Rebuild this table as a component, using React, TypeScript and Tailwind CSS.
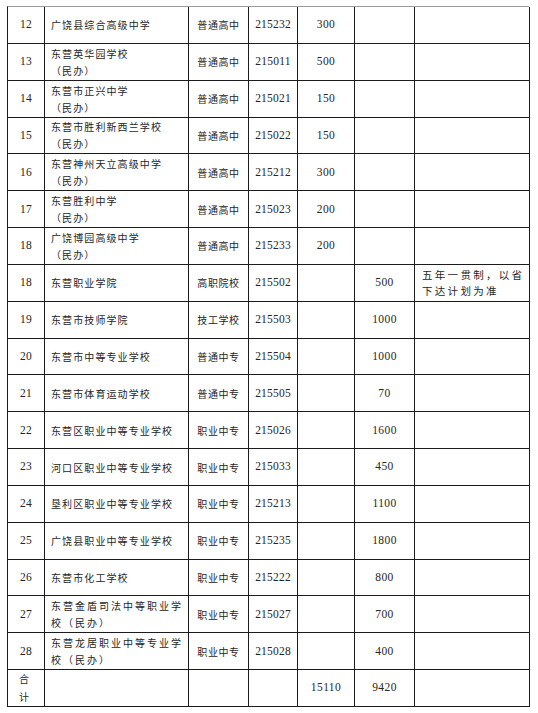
const cjk = "font-['Noto_Sans_CJK_SC',sans-serif]";
const num = "font-['Liberation_Serif','Noto_Sans_CJK_SC',serif]";

type Row = {
  no: string;
  name: string[];
  wide?: boolean;
  type: string;
  code: string;
  a: string;
  b: string;
  note?: string[];
};

const rows: Row[] = [
  { no: '12', name: ['广饶县综合高级中学'], type: '普通高中', code: '215232', a: '300', b: '' },
  { no: '13', name: ['东营英华园学校', '（民办）'], type: '普通高中', code: '215011', a: '500', b: '' },
  { no: '14', name: ['东营市正兴中学', '（民办）'], type: '普通高中', code: '215021', a: '150', b: '' },
  { no: '15', name: ['东营市胜利新西兰学校', '（民办）'], type: '普通高中', code: '215022', a: '150', b: '' },
  { no: '16', name: ['东营神州天立高级中学', '（民办）'], type: '普通高中', code: '215212', a: '300', b: '' },
  { no: '17', name: ['东营胜利中学', '（民办）'], type: '普通高中', code: '215023', a: '200', b: '' },
  { no: '18', name: ['广饶博园高级中学', '（民办）'], type: '普通高中', code: '215233', a: '200', b: '' },
  { no: '18', name: ['东营职业学院'], type: '高职院校', code: '215502', a: '', b: '500', note: ['五年一贯制，以省', '下达计划为准'] },
  { no: '19', name: ['东营市技师学院'], type: '技工学校', code: '215503', a: '', b: '1000' },
  { no: '20', name: ['东营市中等专业学校'], type: '普通中专', code: '215504', a: '', b: '1000' },
  { no: '21', name: ['东营市体育运动学校'], type: '普通中专', code: '215505', a: '', b: '70' },
  { no: '22', name: ['东营区职业中等专业学校'], type: '职业中专', code: '215026', a: '', b: '1600' },
  { no: '23', name: ['河口区职业中等专业学校'], type: '职业中专', code: '215033', a: '', b: '450' },
  { no: '24', name: ['垦利区职业中等专业学校'], type: '职业中专', code: '215213', a: '', b: '1100' },
  { no: '25', name: ['广饶县职业中等专业学校'], type: '职业中专', code: '215235', a: '', b: '1800' },
  { no: '26', name: ['东营市化工学校'], type: '职业中专', code: '215222', a: '', b: '800' },
  { no: '27', name: ['东营金盾司法中等职业学', '校（民办）'], wide: true, type: '职业中专', code: '215027', a: '', b: '700' },
  { no: '28', name: ['东营龙居职业中等专业学', '校（民办）'], wide: true, type: '职业中专', code: '215028', a: '', b: '400' },
];

const cell = 'border-r border-b border-[#1c1c1c] flex items-center min-h-0';

const App = () => {
  return (
    <div className="w-[538px] h-[713px] bg-white text-[#262626]">
      <div className="ml-[7px] pt-[6px]">
        <div className="grid grid-cols-[37px_144px_60px_49px_57px_60px_115px] grid-rows-[repeat(19,minmax(0,1fr))] h-[701px] w-[522px] border-t border-l border-t-[#9a9a9a] border-l-[#1c1c1c]">
          {rows.map((r, i) => (
            <div key={i} className="contents">
              <div className={`${cell} justify-center ${num} text-[11.5px] tracking-[0.3px]`}>{r.no}</div>
              <div className={`${cell} pl-[6px] ${cjk} text-[10px] leading-[17px]`}>
                <div className={r.wide ? 'tracking-[2px]' : 'tracking-[1.1px]'}>
                  {r.name.map((n, j) => (
                    <div key={j}>{n}</div>
                  ))}
                </div>
              </div>
              <div className={`${cell} justify-center ${cjk} text-[10px] tracking-[0.6px]`}>{r.type}</div>
              <div className={`${cell} justify-center ${num} text-[11.5px] tracking-[0.2px]`}>{r.code}</div>
              <div className={`${cell} justify-center ${num} text-[11.5px] tracking-[0.4px]`}>{r.a}</div>
              <div className={`${cell} justify-center ${num} text-[11.5px] tracking-[0.4px]`}>{r.b}</div>
              <div className={`${cell} pl-[7px] ${cjk} text-[10.5px] tracking-[2.3px] leading-[16px]`}>
                {r.note && (
                  <div>
                    {r.note.map((n, j) => (
                      <div key={j}>{n}</div>
                    ))}
                  </div>
                )}
              </div>
            </div>
          ))}
          <div className={`${cell} pl-[11px] ${cjk} text-[10px] leading-[18px]`}>
            <div>
              <div>合</div>
              <div>计</div>
            </div>
          </div>
          <div className={cell}></div>
          <div className={cell}></div>
          <div className={cell}></div>
          <div className={`${cell} justify-center ${num} text-[11.5px] tracking-[0.4px]`}>15110</div>
          <div className={`${cell} justify-center ${num} text-[11.5px] tracking-[0.4px]`}>9420</div>
          <div className={cell}></div>
        </div>
      </div>
    </div>
  );
};

export default App;
